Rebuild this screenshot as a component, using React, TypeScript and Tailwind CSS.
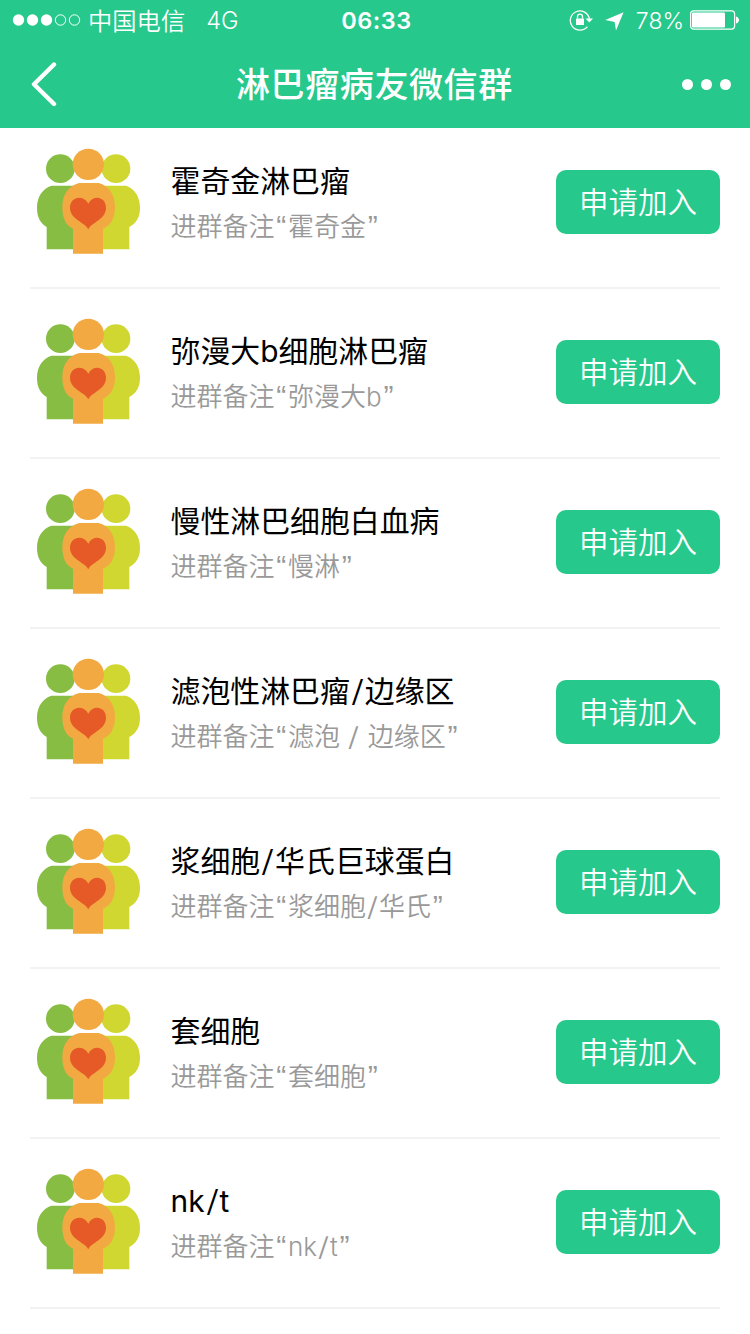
const groups = [
    { name: "霍奇金淋巴瘤", remark: "霍奇金" },
    { name: "弥漫大b细胞淋巴瘤", remark: "弥漫大b" },
    { name: "慢性淋巴细胞白血病", remark: "慢淋" },
    { name: "滤泡性淋巴瘤/边缘区", remark: "滤泡 / 边缘区" },
    { name: "浆细胞/华氏巨球蛋白", remark: "浆细胞/华氏" },
    { name: "套细胞", remark: "套细胞" },
    { name: "nk/t", remark: "nk/t" },
];

const GroupIcon = () => (
    <svg className="w-[106px] h-[110px] shrink-0" viewBox="48 33 318 330">
        <circle cx="121" cy="98" r="43" fill="#87bd43" />
        <circle cx="288" cy="98" r="43" fill="#cfd730" />
        <path d="M94 149H200V340H80V273C61 262 51 243 51 215C51 181 69 157 94 149Z" fill="#87bd43" />
        <path d="M210 149H318C343 157 360 181 360 215C360 243 349 262 328 273V340H210Z" fill="#cfd730" />
        <circle cx="205" cy="85" r="47" fill="#f2a942" />
        <path d="M178 141H236C267 149 285 176 285 214C285 247 272 269 249 278V353H159V278C138 269 127 247 127 214C127 176 145 149 178 141Z" fill="#f2a942" />
        <path d="M205 280C197 259 150 251 150 215C150 182 190 174 205 203C219 174 258 182 258 215C258 251 213 259 205 280Z" fill="#e65a28" />
    </svg>
);

// slashes get a bit of air on both sides
const Spaced = ({ text }: { text: string }) => (
    <>
        {text.split(/(\/)/).map((part, i) =>
            part === "/" ? (
                <span key={i} className="inline-block w-[0.5em] text-center leading-none font-light scale-x-125">/</span>
            ) : (
                part
            )
        )}
    </>
);

const Quote = ({ mark }: { mark: string }) => (
    <span className="inline-block w-[13.5px] text-center leading-none text-[30px] font-['Liberation_Sans']">{mark}</span>
);

const StatusBar = () => (
    <div className="h-10 flex items-center justify-between pl-3 pr-[11px] text-[23.5px] leading-10">
        <div className="flex-1 flex items-center">
            <svg className="w-[70px] h-3 mr-[6px]" viewBox="0 0 70 12">
                <circle cx="6.5" cy="6" r="5.7" fill="white" />
                <circle cx="20.5" cy="6" r="5.7" fill="white" />
                <circle cx="34.5" cy="6" r="5.7" fill="white" />
                <circle cx="48.5" cy="6" r="5.2" fill="none" stroke="white" />
                <circle cx="62.5" cy="6" r="5.2" fill="none" stroke="white" />
            </svg>
            <span className="pt-[3px] text-[24.3px] leading-[37px] font-[350]">中国电信</span>
            <span className="ml-[21px] pt-0.5 leading-[38px] font-light">4G</span>
        </div>
        <span className="ml-0.5 pt-0.5 leading-[38px] font-semibold tracking-[0.5px]">06:33</span>
        <div className="flex-1 flex items-center justify-end">
            <svg className="w-6 h-[22px]" viewBox="0 0 24 22" fill="none">
                <path d="M18.4 17.6A9.6 9.6 0 1 1 20.4 10" stroke="white" strokeWidth="1.3" />
                <path d="M16.5 9.5H24L20.3 13.5Z" fill="white" />
                <rect x="7" y="9.4" width="8" height="6.6" rx="0.6" fill="white" />
                <path d="M8.5 9.5V7.6a2.5 2.5 0 0 1 5 0V9.5" stroke="white" strokeWidth="1.3" />
            </svg>
            <svg className="w-[19px] h-[19px] ml-3 mt-0.5" viewBox="0 0 19 19">
                <path d="M18.6 0.2L11 18.4L9.6 10L0.2 8Z" fill="white" />
            </svg>
            <span className="ml-3 pt-0.5 text-[23px] leading-[38px] font-light">78%</span>
            <svg className="w-[49px] h-5 ml-[6px]" viewBox="0 0 49 20">
                <rect x="0.6" y="0.9" width="44" height="18.2" rx="3" fill="none" stroke="white" strokeWidth="1.2" />
                <rect x="2" y="2.5" width="33" height="15" rx="1.2" fill="white" />
                <path d="M46 6.5C48 7 49 8.5 49 10S48 13 46 13.5Z" fill="white" />
            </svg>
        </div>
    </div>
);

const NavBar = () => (
    <div className="h-[88px] flex items-center justify-between pl-[30px] pr-[19px]">
        <button className="w-[206px]" aria-label="返回">
            <svg className="w-7 h-[46px]" viewBox="0 0 28 46" fill="none">
                <path d="M24 3.5L4 23.2L24 43" stroke="white" strokeWidth="4.4" strokeLinecap="round" strokeLinejoin="round" />
            </svg>
        </button>
        <h1 className="flex-1 pt-0.5 text-[34px] leading-[50px] font-medium tracking-[0.6px]">淋巴瘤病友微信群</h1>
        <div className="flex gap-2">
            <i className="size-[11px] rounded-full bg-white" />
            <i className="size-[11px] rounded-full bg-white" />
            <i className="size-[11px] rounded-full bg-white" />
        </div>
    </div>
);

const App = () => {
    return (
        <div className="w-[750px] h-[1334px] overflow-hidden bg-white font-['Inter','Noto_Sans_CJK_SC',sans-serif]">
            <header className="relative z-10 h-32 bg-[#26c88c] text-white">
                <StatusBar />
                <NavBar />
            </header>
            {/* the list is scrolled slightly under the header */}
            <ul className="-mt-[9px] px-[30px]">
                {groups.map((group) => (
                    <li key={group.name} className="h-[170px] pl-[6px] pb-[2px] flex items-center border-b-2 border-[#f2f2f2]">
                        <GroupIcon />
                        <div className="ml-[28.5px] pt-1 flex-1 whitespace-nowrap">
                            <h2 className="h-[45px] text-[29.9px] leading-[45px] text-black">
                                <Spaced text={group.name} />
                            </h2>
                            <p className="h-[45px] text-[26px] leading-[45px] font-[350] text-[#999]">
                                进群备注
                                <Quote mark="“" />
                                <Spaced text={group.remark} />
                                <Quote mark="”" />
                            </p>
                        </div>
                        <button className="w-[164px] h-16 rounded-[10px] bg-[#26c88c] text-white text-[29.5px] font-[350]">
                            申请加入
                        </button>
                    </li>
                ))}
            </ul>
        </div>
    );
};

export default App;
